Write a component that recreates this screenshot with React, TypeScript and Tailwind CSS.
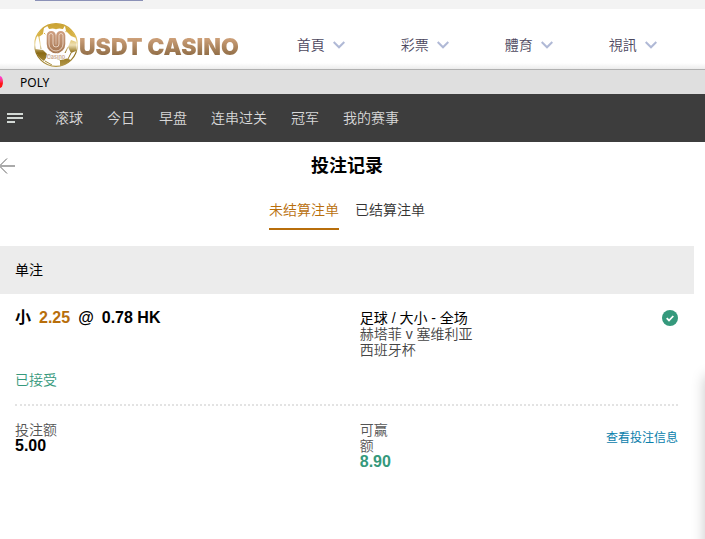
import { useState } from "react";

const siteMenu = ["首頁", "彩票", "體育", "視訊"];
const sportMenu = ["滚球", "今日", "早盘", "连串过关", "冠军", "我的赛事"];
const tabs = ["未结算注单", "已结算注单"];

function Logo() {
  return (
    <a href="#" className="flex items-center">
      <svg className="size-11 shrink-0" viewBox="0 0 44 44" aria-hidden="true">
        <defs>
          <linearGradient id="gold" gradientUnits="userSpaceOnUse" x1="0" y1="0" x2="0" y2="44">
            <stop offset="0" stopColor="#c9a132" />
            <stop offset="0.3" stopColor="#d9b548" />
            <stop offset="0.5" stopColor="#eee0b4" />
            <stop offset="0.68" stopColor="#8a6a14" />
            <stop offset="1" stopColor="#b59a4c" />
          </linearGradient>
          <linearGradient id="bronze" gradientUnits="userSpaceOnUse" x1="0" y1="8" x2="0" y2="32">
            <stop offset="0" stopColor="#d0a081" />
            <stop offset="1" stopColor="#a2744f" />
          </linearGradient>
        </defs>
        <circle cx="22" cy="22" r="21.300" fill="#fff" stroke="url(#gold)" strokeWidth="1.200" />
        <g fill="url(#gold)">
          <path d="M13 2.500 Q22 -1 31 2.500 L29 6 L23 8 L15 6 Z" />
          <path d="M31 3 Q38 6 42 15 L37 13 L32 8 Z" />
          <path d="M3 13 Q6 7 10 4.500 L9 11 L5 14 Z" />
          <path d="M37 17 L42.500 19 L42 28 L37 30 L34 24 Z" />
          <path d="M1 26 L9 27 L14 32 L10 38 Q3 34 1 26 Z" />
          <path d="M26 37 L33 35.500 L37 37 Q32 42 26 43 Z" />
        </g>
        <path
          d="M10 10 L13 13 M5 14 L7 26 M14 32 L26 37 M34 24 L31 30 M37 30 L34 36 M11 38 L18 42 M32 8 L31 12"
          fill="none"
          stroke="url(#gold)"
        />
        <path
          d="M15 21 V13 A3.500 3.500 0 0 1 22 13 V21 M22 13 A3.500 3.500 0 0 1 29 13 V21 A7 7 0 0 1 15 21"
          fill="none"
          stroke="#fff"
          strokeWidth="8"
        />
        <path
          d="M19.500 21.500 V12.500 A2 2 0 0 0 15 12.500 V21 A7 7 0 0 0 29 21 V12.500 A2 2 0 0 0 24.500 12.500 V21.500 A2 2 0 0 1 19.500 21.500"
          fill="none"
          stroke="url(#bronze)"
          strokeWidth="4.600"
        />
        <path
          d="M19 21 V12.500 A2 2 0 0 0 15 12.500 V21 A7 7 0 0 0 29 21 V12.500 A2 2 0 0 0 25 12.500 V21 A2.500 2.500 0 0 1 19 21"
          fill="none"
          stroke="#f4e3d6"
          strokeWidth="0.800"
        />
        <text x="22" y="36" textAnchor="middle" fontSize="5.500" fontWeight="600" fontFamily="Inter, sans-serif" fill="#c9a78c" stroke="#fff" strokeWidth="1" paintOrder="stroke">
          Casino
        </text>
      </svg>
      <span className="bg-linear-to-b from-[#d9aa83] from-20% to-[#8f6c45] to-80% bg-clip-text pt-[3px] pl-px font-[Inter,sans-serif] text-[23px] leading-8 font-black whitespace-nowrap text-transparent">
        USDT CASINO
      </span>
    </a>
  );
}

function Chevron() {
  return (
    <svg className="h-2 w-3" viewBox="0 0 12 8" fill="none" stroke="#b0b9d6" strokeWidth="2" aria-hidden="true">
      <path d="M0.700 1 L6 6.300 L11.300 1" />
    </svg>
  );
}

export default function App() {
  const [tab, setTab] = useState(0);

  return (
    <div className="relative min-h-screen overflow-hidden bg-white font-['Liberation_Sans','Noto_Sans_CJK_SC',sans-serif] text-sm text-black">
      <div className="h-[9px] bg-[#f3f3f3] pl-[35px]">
        <div className="h-px w-[108px] bg-[#8b91b7]" />
      </div>

      <header className="flex h-[61px] items-center border-b border-[#b0b0b0] bg-linear-to-b from-white from-90% to-[#ececec] pt-3 pl-[34px]">
        <Logo />
        <nav className="ml-[58px] flex gap-14 font-['Liberation_Sans','Noto_Sans_CJK_TC',sans-serif] font-[350] text-[#4d485e]">
          {siteMenu.map((item) => (
            <a key={item} href="#" className="flex items-center gap-2 leading-5 whitespace-nowrap">
              {item}
              <Chevron />
            </a>
          ))}
        </nav>
      </header>

      <div className="flex h-6 items-center bg-[#dfdfdf]">
        <span className="h-3 w-[3px] rounded-r-[3px_6px] bg-linear-to-b from-[#ff35e8] to-[#ff1616] to-60%" />
        <span className="pt-px pl-[17px] font-['Noto_Sans',sans-serif] text-xs">POLY</span>
      </div>

      <nav className="flex h-12 items-center gap-6 bg-[#3d3d3d] pl-[7px] font-[350] text-[#d8d8d8]">
        <button type="button" aria-label="菜单" className="mr-2">
          <svg className="h-3 w-4" viewBox="0 0 16 12" fill="#d3d9d5">
            <path d="M0 1h16v2H0zM0 5h16v2H0zM0 9h8v2H0z" />
          </svg>
        </button>
        {sportMenu.map((item) => (
          <a key={item} href="#" className="whitespace-nowrap">
            {item}
          </a>
        ))}
      </nav>

      <main className="pr-[11px]">
        <div className="flex h-12 items-center">
          <button type="button" aria-label="返回" className="w-4">
            <svg className="h-4 w-4" viewBox="0 0 16 16" fill="none" stroke="#666">
              <path d="M7 0.500 L-0.500 8 L7 15.500" />
              <path d="M0 8 H15" stroke="#aaa" strokeWidth="2" />
            </svg>
          </button>
          <h1 className="flex-1 pr-4 text-center text-lg font-bold">投注记录</h1>
        </div>

        <div className="flex justify-center gap-4 pb-4 font-[350]">
          {tabs.map((item, i) => (
            <button
              key={item}
              type="button"
              onClick={() => setTab(i)}
              className={
                i === tab
                  ? "h-10 border-b-2 border-[#b86e0b] pt-px text-[#b86e0b]"
                  : "h-10 border-b-2 border-transparent pt-px text-[#333]"
              }
            >
              {item}
            </button>
          ))}
        </div>

        <h2 className="flex h-12 items-center bg-[#ececec] px-[15px]">单注</h2>

        <section className="px-4 pl-[15px]">
          <div className="flex items-start pt-4 leading-4">
            <div className="flex w-[52%] gap-2 text-base leading-4 font-bold">
              <span>小</span>
              <span className="text-[#b86e0b]">2.25</span>
              <span>@</span>
              <span>0.78 HK</span>
            </div>
            <div className="flex-1 font-[350] text-[#444]">
              <p className="font-normal text-black">足球 / 大小 - 全场</p>
              <p>赫塔菲 v 塞维利亚</p>
              <p>西班牙杯</p>
            </div>
            <svg className="size-4" viewBox="0 0 16 16" aria-hidden="true">
              <circle cx="8" cy="8" r="8" fill="#35997c" />
              <path d="M4.700 8.200 L7 10.500 L11.300 6" fill="none" stroke="#fff" strokeWidth="1.800" />
            </svg>
          </div>
          <p className="pt-3 pb-[14px] leading-5 font-[350] text-[#35997c]">已接受</p>

          <div className="flex items-start border-t-2 border-dotted border-[#e3e3e3] pt-4 leading-4">
            <dl className="w-[52%]">
              <dt className="font-[350] text-[#555]">投注额</dt>
              <dd className="text-base leading-4 font-bold">5.00</dd>
            </dl>
            <dl className="flex-1">
              <dt className="w-8 font-[350] text-[#555]">可赢额</dt>
              <dd className="text-base leading-4 font-bold text-[#35997c]">8.90</dd>
            </dl>
            <a href="#" className="pt-2 text-xs leading-4 text-[#0a80ab]">
              查看投注信息
            </a>
          </div>
        </section>
      </main>

      {/* shadow of the floating side panel */}
      <div className="absolute top-[376px] -right-10 -bottom-10 w-10 shadow-[0_0_14px_rgba(0,0,0,0.22)]" />
    </div>
  );
}
